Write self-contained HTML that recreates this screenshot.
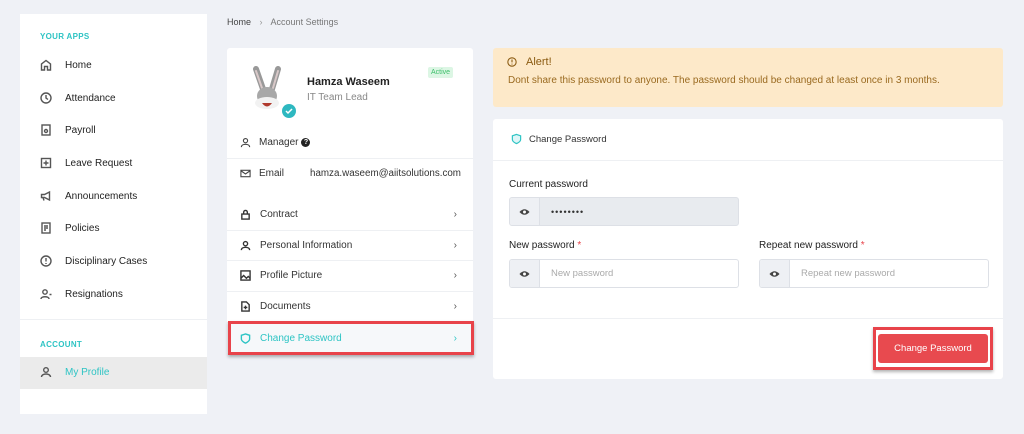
<!DOCTYPE html>
<html><head><meta charset="utf-8"><style>
*{box-sizing:border-box;margin:0;padding:0}
body{width:1024px;height:434px;background:#eff1f6;font-family:"Liberation Sans",sans-serif;position:relative;overflow:hidden;color:#333}
.abs{position:absolute}
.side{left:20px;top:14px;width:187px;height:400px;background:#fff}
.sec{color:#2ec4c4;font-size:8px;font-weight:bold;letter-spacing:.3px;position:absolute;left:20px}
.item{position:absolute;left:20px;font-size:10px;color:#222;display:flex;align-items:center}
.item svg{width:12px;height:12px;margin-right:13px;fill:none;stroke:#555;stroke-width:1.4}
.card{background:#fff;border-radius:3px}
.row{position:absolute;left:0;width:246px;height:30px;border-top:1px solid #eef0f3;display:flex;align-items:center;font-size:10px;color:#333;padding-left:13px}
.row svg{width:11px;height:11px;margin-right:9px;fill:none;stroke:#333;stroke-width:1.5}
.row .ch{position:absolute;right:16px;color:#555;font-size:10px}
.lbl{font-size:10px;color:#222;position:absolute}
.inp{position:absolute;height:29px;width:230px;border:1px solid #dde0e6;border-radius:3px;display:flex;overflow:hidden;background:#fff}
.inp .ic{width:30px;background:#eef0f4;border-right:1px solid #dde0e6;display:flex;align-items:center;justify-content:center}
.inp .t{padding-left:11px;display:flex;align-items:center;font-size:9.5px;color:#aaa}
</style></head><body>
<div class="abs side">
<div class="sec" style="top:18px">YOUR APPS</div>
<div class="item" style="top:45px"><svg viewBox="0 0 12 12"><path d="M1.5 11V5L6 1.5 10.5 5V11H7.5V7.5h-3V11z"/></svg>Home</div>
<div class="item" style="top:78px"><svg viewBox="0 0 12 12"><circle cx="6" cy="6" r="5"/><path d="M6 3v3l2 1.5"/></svg>Attendance</div>
<div class="item" style="top:110px"><svg viewBox="0 0 12 12"><rect x="2" y="1" width="8" height="10"/><circle cx="6" cy="7" r="1.5"/></svg>Payroll</div>
<div class="item" style="top:143px"><svg viewBox="0 0 12 12"><rect x="1.5" y="1.5" width="9" height="9"/><path d="M6 3.5v5M3.5 6h5"/></svg>Leave Request</div>
<div class="item" style="top:176px"><svg viewBox="0 0 12 12"><path d="M1.5 4.5h3L9.5 2v8l-5-2.5h-3zM3 7.5l1 3"/></svg>Announcements</div>
<div class="item" style="top:208px"><svg viewBox="0 0 12 12"><rect x="2" y="1" width="8" height="10"/><path d="M4 4h4M4 6h4M4 8h2"/></svg>Policies</div>
<div class="item" style="top:241px"><svg viewBox="0 0 12 12"><circle cx="6" cy="6" r="5"/><path d="M6 3v3.5M6 8v1"/></svg>Disciplinary Cases</div>
<div class="item" style="top:274px"><svg viewBox="0 0 12 12"><circle cx="5" cy="4" r="2.2"/><path d="M1 11c0-3 8-3 8 0M9.5 6.5h2"/></svg>Resignations</div>
<div class="abs" style="left:0;top:305px;width:187px;border-top:1px solid #eef0f3"></div>
<div class="sec" style="top:326px">ACCOUNT</div>
<div class="abs" style="left:0;top:343px;width:187px;height:32px;background:#ebebeb"></div>
<div class="item" style="top:352px;color:#2ec4c4"><svg viewBox="0 0 12 12"><circle cx="6" cy="4" r="2.3"/><path d="M1.5 11c0-4 9-4 9 0"/></svg>My Profile</div>
</div>

<div class="abs" style="left:227px;top:17px;font-size:9px;color:#555"><b style="font-weight:normal;color:#444">Home</b> <span style="color:#999;margin:0 6px">›</span> <span style="color:#777">Account Settings</span></div>

<div class="abs card" style="left:227px;top:48px;width:246px;height:305px">
 <div class="abs" style="left:20px;top:18px;width:50px;height:52px">
  <svg width="50" height="52" viewBox="0 0 50 52"><path d="M9 3l7 20M31 3l-6 20" stroke="#999" stroke-width="6" stroke-linecap="round"/><path d="M9 5l6 17M31 5l-5 17" stroke="#d8c8c8" stroke-width="2" stroke-linecap="round"/><ellipse cx="20" cy="30" rx="10" ry="9" fill="#a8a8a8"/><ellipse cx="20" cy="37" rx="12" ry="6" fill="#f2f2f2"/><path d="M15 37q5 7 10 0z" fill="#b03a2e"/><circle cx="42" cy="45" r="7" fill="#2eb8c0"/><path d="M39 45l2 2 4-4" stroke="#fff" stroke-width="1.5" fill="none"/></svg>
 </div>
 <div class="abs" style="left:80px;top:28px;font-size:11px;font-weight:bold;color:#222">Hamza Waseem</div>
 <div class="abs" style="left:80px;top:44px;font-size:10px;color:#888">IT Team Lead</div>
 <div class="abs" style="left:201px;top:19px;background:#dcf6e4;color:#3cbf6a;font-size:7px;padding:2px 3px;border-radius:2px">Active</div>
 <div class="abs" style="left:13px;top:89px;font-size:10px;display:flex;align-items:center"><svg width="11" height="11" viewBox="0 0 12 12" fill="none" stroke="#444" stroke-width="1.2" style="margin-right:8px"><circle cx="6" cy="4" r="2.3"/><path d="M1.5 11c0-4 9-4 9 0"/></svg>Manager <span style="display:inline-block;width:9px;height:9px;border-radius:50%;background:#222;color:#fff;font-size:7px;text-align:center;line-height:9px;margin-left:3px;font-weight:bold">?</span></div>
 <div class="abs" style="left:0;top:110px;width:246px;border-top:1px solid #eef0f3"></div>
 <div class="abs" style="left:13px;top:120px;font-size:10px;display:flex;align-items:center;width:230px"><svg width="11" height="11" viewBox="0 0 12 12" fill="none" stroke="#444" stroke-width="1.2" style="margin-right:8px"><rect x="1" y="2.5" width="10" height="7"/><path d="M1 3l5 3.5L11 3"/></svg>Email<span style="position:absolute;left:70px;color:#333;font-size:9.8px">hamza.waseem@aiitsolutions.com</span></div>
 <div class="row" style="top:151px;border-top:none"><svg viewBox="0 0 12 12"><rect x="2" y="5.5" width="8" height="5.5"/><path d="M4 5.5V3.5a2 2 0 014 0v2"/></svg>Contract<span class="ch">›</span></div>
 <div class="row" style="top:182px"><svg viewBox="0 0 12 12"><circle cx="6" cy="4" r="2.3"/><path d="M1.5 11c0-4 9-4 9 0"/></svg>Personal Information<span class="ch">›</span></div>
 <div class="row" style="top:212px"><svg viewBox="0 0 12 12"><rect x="1" y="1" width="10" height="10"/><path d="M1 9l3-3 3 3 2-2 2 2"/></svg>Profile Picture<span class="ch">›</span></div>
 <div class="row" style="top:243px"><svg viewBox="0 0 12 12"><path d="M2 1h5l3 3v7H2z"/><path d="M6 5v4M4 7h4"/></svg>Documents<span class="ch">›</span></div>
 <div class="row" style="top:274px;background:#f6f8fa;color:#2ec4c4;height:31px"><svg viewBox="0 0 12 12" style="stroke:#2ec4c4"><path d="M6 1l4.5 1.5v4C10.5 9 6 11 6 11S1.5 9 1.5 6.5v-4z"/></svg>Change Password<span class="ch" style="color:#2ec4c4">›</span></div>
</div>
<div class="abs" style="left:228px;top:321px;width:246px;height:34px;border:3px solid #e8434a;box-shadow:0 2px 3px rgba(0,0,0,.3)"></div>

<div class="abs" style="left:493px;top:48px;width:510px;height:59px;background:#fde9c9;border-radius:3px">
 <div class="abs" style="left:14px;top:8px;font-size:11px;color:#8a5a10;display:flex;align-items:center"><svg width="10" height="10" viewBox="0 0 12 12" fill="none" stroke="#8a5a10" stroke-width="1.3" style="margin-right:9px"><circle cx="6" cy="6" r="5"/><path d="M6 3v3.5M6 8v1"/></svg>Alert!</div>
 <div class="abs" style="left:15px;top:27px;font-size:10px;color:#9a6a20">Dont share this password to anyone. The password should be changed at least once in 3 months.</div>
</div>

<div class="abs card" style="left:493px;top:119px;width:510px;height:260px">
 <div class="abs" style="left:18px;top:14px;font-size:9.5px;color:#333;display:flex;align-items:center"><svg width="11" height="12" viewBox="0 0 12 12" fill="#dff6f8" stroke="#2ec4c4" stroke-width="1.3" style="margin-right:7px"><path d="M6 1l4.5 1.5v4C10.5 9 6 11 6 11S1.5 9 1.5 6.5v-4z"/></svg>Change Password</div>
 <div class="abs" style="left:0;top:41px;width:510px;border-top:1px solid #eef0f3"></div>
 <div class="lbl" style="left:16px;top:60px">Current password</div>
 <div class="inp" style="left:16px;top:78px;background:#e8ebef"><div class="ic"><svg width="11" height="8" viewBox="0 0 12 8"><path d="M0.5 4Q6-2 11.5 4Q6 10 .5 4z" fill="#444"/><circle cx="6" cy="4" r="1.6" fill="#fff"/></svg></div><div class="t" style="color:#333;letter-spacing:1px;font-size:9px">••••••••</div></div>
 <div class="lbl" style="left:16px;top:121px">New password <span style="color:#e8434a">*</span></div>
 <div class="inp" style="left:16px;top:140px"><div class="ic"><svg width="11" height="8" viewBox="0 0 12 8"><path d="M0.5 4Q6-2 11.5 4Q6 10 .5 4z" fill="#444"/><circle cx="6" cy="4" r="1.6" fill="#fff"/></svg></div><div class="t">New password</div></div>
 <div class="lbl" style="left:266px;top:121px">Repeat new password <span style="color:#e8434a">*</span></div>
 <div class="inp" style="left:266px;top:140px"><div class="ic"><svg width="11" height="8" viewBox="0 0 12 8"><path d="M0.5 4Q6-2 11.5 4Q6 10 .5 4z" fill="#444"/><circle cx="6" cy="4" r="1.6" fill="#fff"/></svg></div><div class="t">Repeat new password</div></div>
 <div class="abs" style="left:0;top:199px;width:510px;border-top:1px solid #eef0f3"></div>
</div>
<div class="abs" style="left:873px;top:327px;width:120px;height:43px;border:3px solid #e8434a;box-shadow:0 2px 3px rgba(0,0,0,.3);background:#fff"></div>
<div class="abs" style="left:878px;top:334px;width:110px;height:29px;background:#e84a4f;border-radius:3px;color:#fff;font-size:9.5px;display:flex;align-items:center;justify-content:center">Change Password</div>
</body></html>
